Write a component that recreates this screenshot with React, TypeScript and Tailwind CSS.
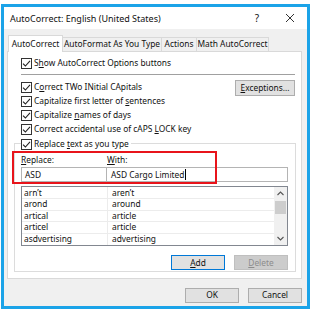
const font = { fontFamily: '"Segoe UI", "Noto Sans", sans-serif' }

function Check() {
  return (
    <span className="flex h-[11px] w-[11px] shrink-0 items-center justify-center border border-[#333] bg-white">
      <svg width="9" height="9" viewBox="0 0 9 9">
        <path d="M1 4.6 L3.4 7 L8 1.8" fill="none" stroke="#222" strokeWidth="1.1" />
      </svg>
    </span>
  )
}

function CheckRow({ children }: { children: React.ReactNode }) {
  return (
    <div className="flex h-[14px] items-center gap-[2px] whitespace-nowrap">
      <Check />
      <span>{children}</span>
    </div>
  )
}

const rows = [
  ['arn\u2019t', 'aren\u2019t'],
  ['arond', 'around'],
  ['artical', 'article'],
  ['articel', 'article'],
  ['asdvertising', 'advertising'],
]

export default function App() {
  return (
    <div
      className="h-[313px] w-[313px] bg-white pb-[4px] pl-[1px] pr-[3px] pt-[4px] text-[8.4px] leading-none text-[#111]"
      style={font}
    >
      <div className="flex h-full flex-col border-[3px] border-[#1ba3e8] bg-[#f0f0f0]">
        {/* title bar */}
        <div className="flex h-[22px] shrink-0 items-center bg-white pl-[6px] text-[9px]">
          <span className="flex-1 whitespace-nowrap">AutoCorrect: English (United States)</span>
          <span className="w-[12px] text-center text-[10px]">?</span>
          <span className="ml-[22px] mr-[12px]">
            <svg width="10" height="10" viewBox="0 0 10 10">
              <path d="M1 1 L9 9 M9 1 L1 9" stroke="#333" strokeWidth="1" />
            </svg>
          </span>
        </div>

        {/* tabs */}
        <div className="mt-[6px] flex h-[16px] items-end whitespace-nowrap pl-[4px]">
          <div className="relative z-10 -mb-px flex h-[17px] w-[55px] items-center justify-center border border-b-0 border-[#d9d9d9] bg-white">
            AutoCorrect
          </div>
          <div className="flex h-[14px] w-[99px] items-center justify-center border border-l-0 border-b-0 border-[#d9d9d9]">
            AutoFormat As You Type
          </div>
          <div className="flex h-[14px] w-[35px] items-center justify-center border border-l-0 border-b-0 border-[#d9d9d9]">
            Actions
          </div>
          <div className="flex h-[14px] w-[72px] items-center justify-center border border-l-0 border-b-0 border-[#d9d9d9]">
            Math AutoCorrect
          </div>
        </div>

        {/* panel */}
        <div className="ml-[3px] mr-[5px] flex h-[228px] flex-col border border-[#d9d9d9] bg-white pl-[13px] pr-[5px] pt-[4px]">
          <CheckRow>
            S<u>h</u>ow AutoCorrect Options buttons
          </CheckRow>
          <div className="mr-[1px] mt-[4px] h-px bg-[#a0a0a0]" />

          <div className="mt-[5px] flex">
            <div className="flex flex-1 flex-col">
              <CheckRow>
                C<u>o</u>rrect TWo INitial CApitals
              </CheckRow>
              <CheckRow>
                Capitalize first letter of <u>s</u>entences
              </CheckRow>
              <CheckRow>
                Capitalize <u>n</u>ames of days
              </CheckRow>
              <CheckRow>
                Correct accidental use of cAPS <u>L</u>OCK key
              </CheckRow>
            </div>
            <div className="mr-[1px] flex h-[16px] w-[60px] items-center justify-center border border-[#adadad] bg-[#e1e1e1]">
              <u>E</u>xceptions...
            </div>
          </div>

          {/* group box */}
          <div className="relative -ml-[7px] mr-0 mt-[7px] h-[129px] border border-[#dcdcdc] pl-[6px] pr-[7px]">
            <div className="absolute -top-[7px] left-[6px] bg-white pr-[2px]">
              <CheckRow>
                Replace <u>t</u>ext as you type
              </CheckRow>
            </div>

            <div className="mt-[12px] flex">
              <div className="w-[86px]">
                <u>R</u>eplace:
              </div>
              <div>
                <u>W</u>ith:
              </div>
            </div>
            <div className="mt-[3px] flex">
              <div className="flex h-[15px] w-[86px] items-center border border-[#b4b4b4] pl-[3px]">ASD</div>
              <div className="flex h-[15px] flex-1 items-center border border-l-0 border-[#b4b4b4] pl-[4px]">
                ASD Cargo Limited
                <span className="ml-px h-[11px] w-px bg-black" />
              </div>
            </div>

            {/* red highlight over the replace/with fields */}
            <div className="pointer-events-none absolute left-[-3px] top-[7px] h-[33px] w-[205px] border-2 border-[#e8141b]" />

            {/* list */}
            <div className="mt-[4px] flex h-[60px] border border-[#828790]">
              <div className="flex flex-1 flex-col">
                {rows.map(([a, b]) => (
                  <div key={a} className="flex h-[12px] border-b border-[#ececec] last:border-b-0">
                    <div className="flex w-[86px] items-center border-r border-[#ececec] pl-[2px]">{a}</div>
                    <div className="flex flex-1 items-center pl-[4px]">{b}</div>
                  </div>
                ))}
              </div>
              <div className="flex w-[13px] flex-col items-center bg-[#f0f0f0]">
                <svg className="mt-[4px]" width="7" height="5" viewBox="0 0 7 5">
                  <path d="M0.5 4 L3.5 1 L6.5 4" fill="none" stroke="#555" strokeWidth="1.1" />
                </svg>
                <div className="mt-[5px] h-[13px] w-[11px] bg-[#cdcdcd]" />
                <svg className="mt-auto mb-[4px]" width="7" height="5" viewBox="0 0 7 5">
                  <path d="M0.5 1 L3.5 4 L6.5 1" fill="none" stroke="#555" strokeWidth="1.1" />
                </svg>
              </div>
            </div>

            <div className="mt-[9px] flex justify-end gap-[9px]">
              <div className="flex h-[15px] w-[54px] items-center justify-center border border-[#0078d7] bg-[#e1e1e1]">
                <u>A</u>dd
              </div>
              <div className="flex h-[15px] w-[54px] items-center justify-center border border-[#bfbfbf] bg-[#cccccc] text-[#8c8c8c]">
                <u>D</u>elete
              </div>
            </div>
          </div>
        </div>

        <div className="mr-[5px] mt-[9px] flex justify-end gap-[9px]">
          <div className="flex h-[15px] w-[54px] items-center justify-center border border-[#adadad] bg-[#e1e1e1]">
            OK
          </div>
          <div className="flex h-[15px] w-[54px] items-center justify-center border border-[#adadad] bg-[#e1e1e1]">
            Cancel
          </div>
        </div>
      </div>
    </div>
  )
}
